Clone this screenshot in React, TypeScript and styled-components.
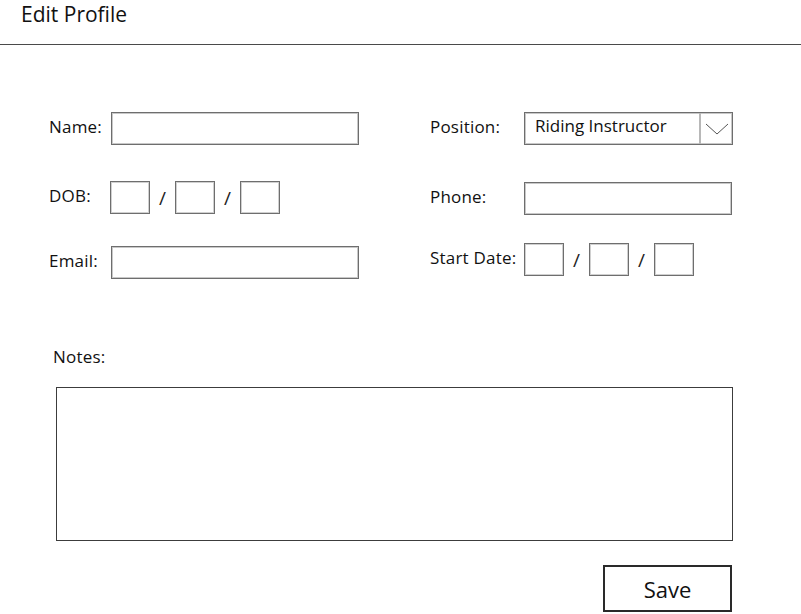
import React from "react";
import styled, { createGlobalStyle } from "styled-components";

const GlobalStyle = createGlobalStyle`
  html, body {
    margin: 0;
    padding: 0;
    background: #ffffff;
  }
  body {
    font-family: "Open Sans", "Noto Sans", Arial, sans-serif;
    color: #111;
  }
`;

const Page = styled.div`
  width: 801px;
  height: 614px;
  background: #fff;
  overflow: hidden;
`;

const Header = styled.div`
  height: 45px;
  border-bottom: 1px solid #4a4a4a;
  padding-left: 21px;
  box-sizing: border-box;
`;

const Title = styled.h1`
  margin: 0;
  padding-top: 1px;
  font-size: 21px;
  font-weight: 400;
  line-height: 26px;
`;

const FormGrid = styled.div`
  display: flex;
  padding-top: 67px;
  padding-left: 49px;
`;

const Column = styled.div<{ width: number }>`
  display: flex;
  flex-direction: column;
  width: ${({ width }) => width}px;
`;

const Row = styled.div<{ top?: number }>`
  display: flex;
  align-items: center;
  height: 33px;
  margin-top: ${({ top }) => top ?? 0}px;
`;

const Label = styled.label<{ width: number }>`
  width: ${({ width }) => width}px;
  flex-shrink: 0;
  font-size: 17px;
  line-height: 22px;
  padding-bottom: 3px;
  letter-spacing: 0.2px;
  color: #111;
`;

const TextBox = styled.div<{ width: number }>`
  width: ${({ width }) => width}px;
  height: 33px;
  box-sizing: border-box;
  border: 1px solid #6e6e6e;
  box-shadow: inset 0 0 0 1px #c8c8c8;
  background: #fff;
`;

const DateBox = styled.div`
  width: 40px;
  height: 33px;
  box-sizing: border-box;
  border: 1px solid #6e6e6e;
  box-shadow: inset 0 0 0 1px #d0d0d0;
`;

const Slash = styled.span`
  width: 25px;
  text-align: center;
  font-size: 19px;
  color: #222;
`;

const Select = styled.div`
  display: flex;
  width: 209px;
  height: 33px;
  box-sizing: border-box;
  border: 1px solid #6e6e6e;
  box-shadow: inset 0 0 0 1px #c8c8c8;
`;

const SelectValue = styled.div`
  flex: 1;
  padding-left: 10px;
  font-size: 17px;
  line-height: 26px;
`;

const SelectArrow = styled.div`
  width: 31px;
  border-left: 2px solid #b8b8b8;
  display: flex;
  align-items: center;
  justify-content: center;
`;

const NotesSection = styled.div`
  padding-left: 53px;
  margin-top: 67px;
`;

const NotesLabel = styled.div`
  font-size: 17px;
  line-height: 22px;
  letter-spacing: 0.2px;
`;

const NotesArea = styled.div`
  margin-top: 19px;
  margin-left: 3px;
  width: 677px;
  height: 154px;
  box-sizing: border-box;
  border: 1px solid #3c3c3c;
`;

const Footer = styled.div`
  display: flex;
  justify-content: flex-end;
  padding-right: 69px;
  margin-top: 24px;
`;

const SaveButton = styled.button`
  width: 129px;
  height: 47px;
  box-sizing: border-box;
  border: 2px solid #2a2a2a;
  background: #fff;
  font-family: "Open Sans", "Noto Sans", Arial, sans-serif;
  font-size: 22px;
  color: #111;
  padding: 0;
`;

const DateFields = () => (
  <>
    <DateBox />
    <Slash>/</Slash>
    <DateBox />
    <Slash>/</Slash>
    <DateBox />
  </>
);

export default function App() {
  return (
    <Page>
      <GlobalStyle />
      <Header>
        <Title>Edit Profile</Title>
      </Header>
      <FormGrid>
        <Column width={381}>
          <Row>
            <Label width={62}>Name:</Label>
            <TextBox width={248} />
          </Row>
          <Row top={36}>
            <Label width={61}>DOB:</Label>
            <DateFields />
          </Row>
          <Row top={32}>
            <Label width={62}>Email:</Label>
            <TextBox width={248} />
          </Row>
        </Column>
        <Column width={310}>
          <Row>
            <Label width={94}>Position:</Label>
            <Select>
              <SelectValue>Riding Instructor</SelectValue>
              <SelectArrow>
                <svg width="24" height="14" viewBox="0 0 24 14">
                  <path d="M1 2 L12 12 L23 2" fill="none" stroke="#555" strokeWidth="1" />
                </svg>
              </SelectArrow>
            </Select>
          </Row>
          <Row top={37}>
            <Label width={94}>Phone:</Label>
            <TextBox width={208} />
          </Row>
          <Row top={28}>
            <Label width={94}>Start Date:</Label>
            <DateFields />
          </Row>
        </Column>
      </FormGrid>
      <NotesSection>
        <NotesLabel>Notes:</NotesLabel>
        <NotesArea />
      </NotesSection>
      <Footer>
        <SaveButton>Save</SaveButton>
      </Footer>
    </Page>
  );
}
